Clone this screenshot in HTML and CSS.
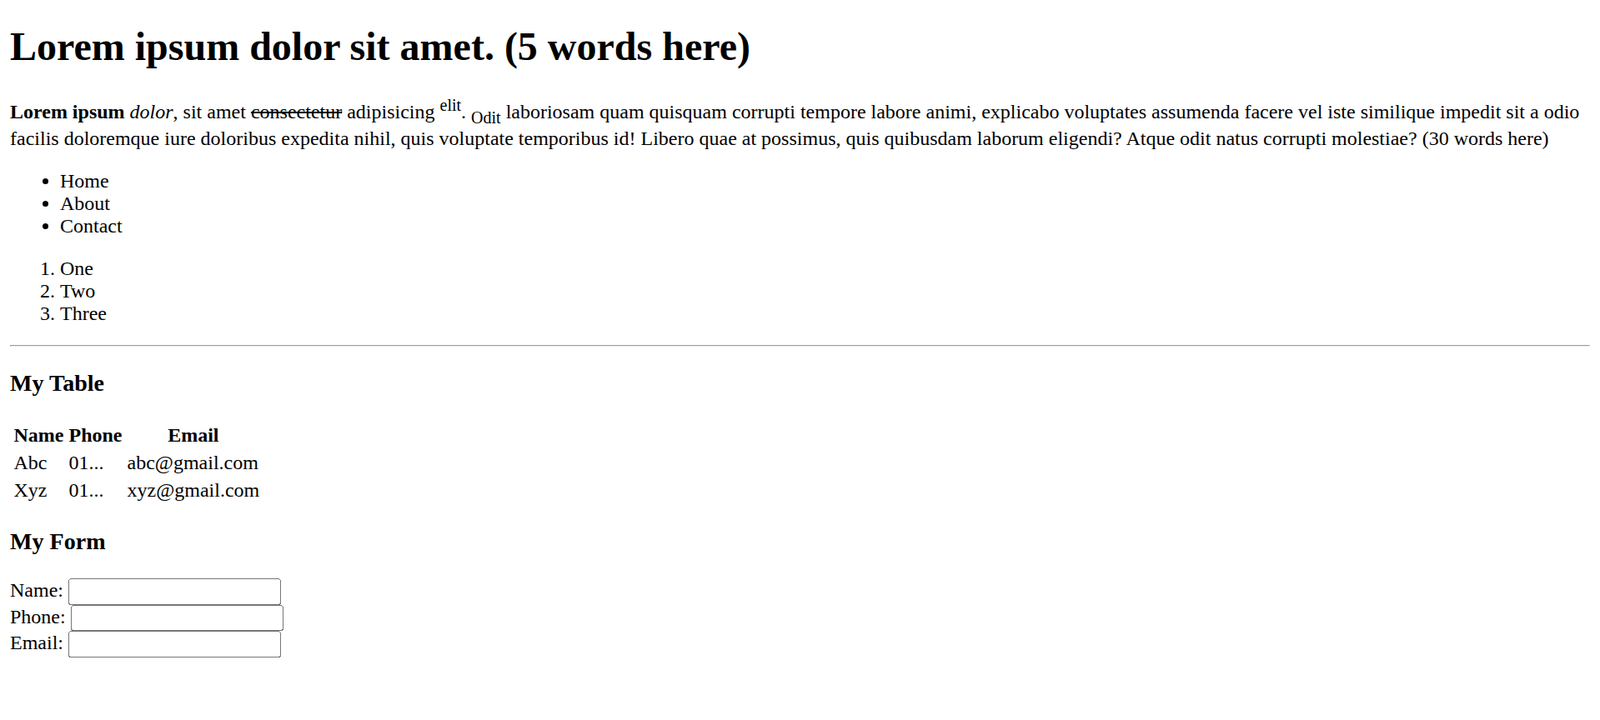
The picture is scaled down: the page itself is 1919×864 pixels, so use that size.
FILE: index.html
```html
<!DOCTYPE html>
<html lang="en">
<head>
<meta charset="utf-8">
<title>Lorem ipsum</title>
<link rel="stylesheet" href="styles.css">
</head>
<body>
<h1 class="title">Lorem ipsum dolor sit amet. (5 words here)</h1>
<p><b>Lorem ipsum</b> <i>dolor</i>, sit amet <del>consectetur</del> adipisicing <sup>elit</sup>. <sub>Odit</sub> laboriosam quam quisquam corrupti tempore labore animi, explicabo voluptates assumenda facere vel iste similique impedit sit a odio facilis doloremque iure doloribus expedita nihil, quis voluptate temporibus id! Libero quae at possimus, quis quibusdam laborum eligendi? Atque odit natus corrupti molestiae? (30 words here)</p>
<ul>
<li>Home</li>
<li>About</li>
<li>Contact</li>
</ul>
<ol>
<li>One</li>
<li>Two</li>
<li>Three</li>
</ol>
<hr>
<h3>My Table</h3>
<table>
<tr><th>Name</th><th>Phone</th><th>Email</th></tr>
<tr><td>Abc</td><td>01...</td><td>abc@gmail.com</td></tr>
<tr><td>Xyz</td><td>01...</td><td>xyz@gmail.com</td></tr>
</table>
<h3>My Form</h3>
<form>
<label for="name">Name:</label> <input class="field" type="text" id="name"><br>
<label for="phone">Phone:</label> <input class="field" type="text" id="phone"><br>
<label for="email">Email:</label> <input class="field" type="text" id="email">
</form>
</body>
</html>
```
FILE: styles.css
```css
html {
  zoom: 1.5;
}
body {
  font-family: "Liberation Serif", "Times New Roman", serif;
  color: #000;
  background: #fff;
}
.title {
  margin-top: 10.7px;
}
.field {
  box-sizing: border-box;
  width: 170px;
  height: 21px;
  font-family: "Liberation Sans", Arial, sans-serif;
  font-size: 13.333px;
}
```
